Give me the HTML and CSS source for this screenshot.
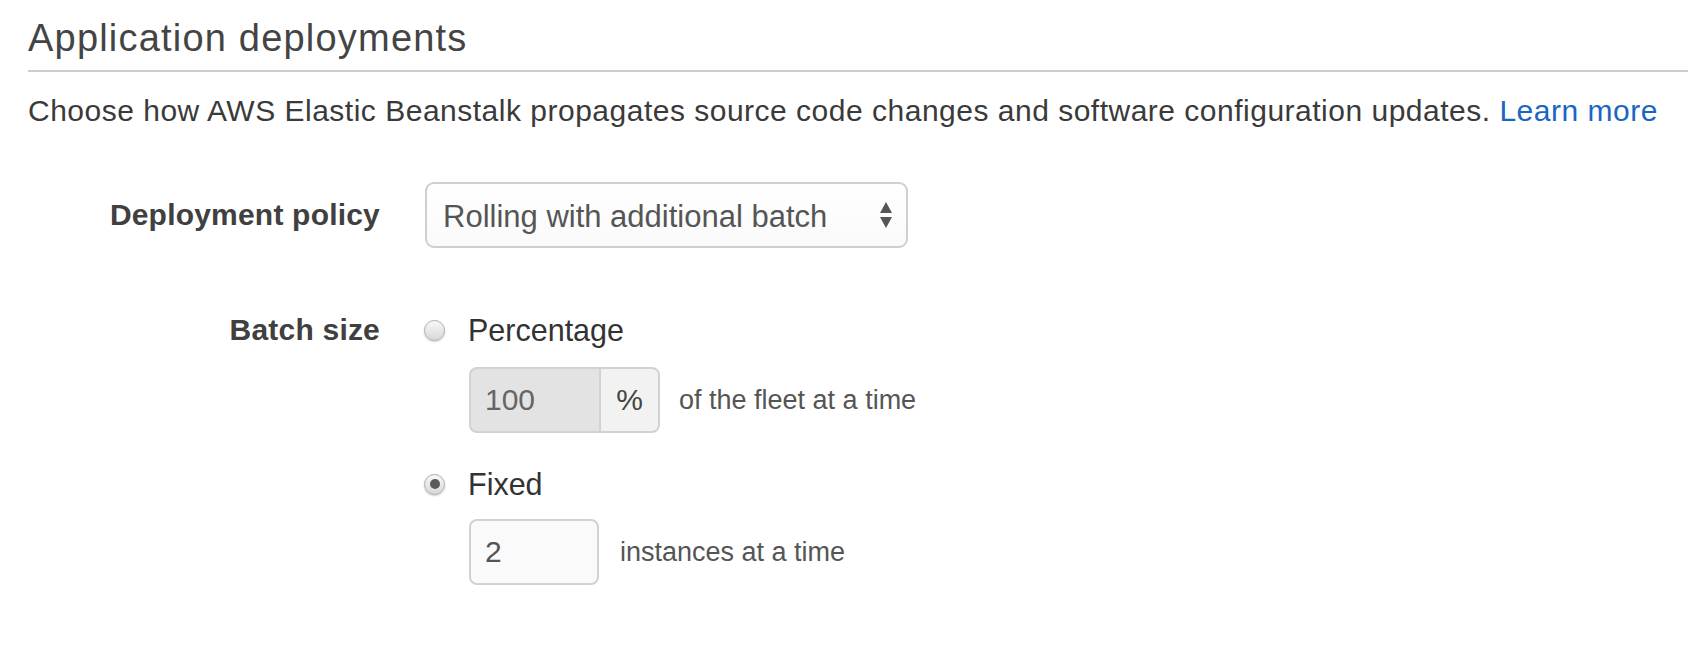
FILE: index.html
```html
<!DOCTYPE html>
<html lang="en">
<head>
<meta charset="utf-8">
<title>Application deployments</title>
<link rel="stylesheet" href="styles.css">
</head>
<body>
<div class="page">
  <h2 class="title">Application deployments</h2>
  <p class="desc">Choose how AWS Elastic Beanstalk propagates source code changes and software configuration updates. <a class="link" href="#">Learn more</a></p>
  <div class="form">
    <div class="row row-policy">
      <div class="label">Deployment policy</div>
      <div class="select">
        <span class="select-text">Rolling with additional batch</span>
        <svg class="arrows" width="14" height="28" viewBox="0 0 14 28">
          <path d="M7 1 L13 12 L1 12 Z" fill="#555"/>
          <path d="M1 16 L13 16 L7 27 Z" fill="#555"/>
        </svg>
      </div>
    </div>
    <div class="row row-batch">
      <div class="label label-top">Batch size</div>
      <div class="options">
        <div class="radio-line">
          <span class="radio"></span>
          <span class="radio-text">Percentage</span>
        </div>
        <div class="sub">
          <div class="group">
            <span class="input input-disabled">100</span>
            <span class="addon">%</span>
          </div>
          <span class="hint">of the fleet at a time</span>
        </div>
        <div class="radio-line radio-line-second">
          <span class="radio radio-checked"></span>
          <span class="radio-text">Fixed</span>
        </div>
        <div class="sub sub-second">
          <span class="input">2</span>
          <span class="hint hint-second">instances at a time</span>
        </div>
      </div>
    </div>
  </div>
</div>
</body>
</html>
```

FILE: styles.css
```css
html, body {
  margin: 0;
  padding: 0;
  background: #ffffff;
}

body {
  font-family: "Liberation Sans", Arial, sans-serif;
  color: #444444;
}

.page {
  padding: 18px 0 0 28px;
}

.title {
  margin: 0;
  font-size: 38px;
  line-height: 40px;
  font-weight: normal;
  letter-spacing: 1.2px;
  color: #444444;
  padding-bottom: 12px;
  border-bottom: 2px solid #cccccc;
}

.desc {
  margin: 21px 0 0 0;
  font-size: 30px;
  line-height: 36px;
  letter-spacing: 0.5px;
  color: #3a3a3a;
}

.link {
  color: #1a66c0;
  text-decoration: none;
}

.form {
  margin-top: 53px;
}

.row {
  display: grid;
  grid-template-columns: 352px auto;
  column-gap: 45px;
}

.row-policy {
  align-items: center;
}

.row-batch {
  margin-top: 62px;
  align-items: start;
}

.label {
  text-align: right;
  font-weight: bold;
  font-size: 30px;
  line-height: 40px;
  color: #404040;
  letter-spacing: 0.2px;
}

.select {
  width: 483px;
  height: 66px;
  box-sizing: border-box;
  border: 2px solid #cfcfcf;
  border-radius: 9px;
  background: linear-gradient(#ffffff, #fafafa);
  display: flex;
  align-items: center;
  justify-content: space-between;
  padding: 0 13px 0 16px;
}

.select-text {
  font-size: 31px;
  color: #555555;
  padding-top: 3px;
}

.arrows {
  display: block;
}

.options {
  display: flex;
  flex-direction: column;
  align-items: flex-start;
}

.radio-line {
  display: flex;
  align-items: center;
  height: 40px;
  gap: 23px;
}

.radio-line-second {
  margin-top: 31px;
}

.radio {
  width: 21px;
  height: 21px;
  box-sizing: border-box;
  border-radius: 50%;
  border: 1px solid #adadad;
  background: linear-gradient(#f8f8f8, #d8d8d8);
  box-shadow: 0 1px 2px rgba(0, 0, 0, 0.2);
  display: flex;
  align-items: center;
  justify-content: center;
  margin-left: -1px;
}

.radio-checked::after {
  content: "";
  width: 10px;
  height: 10px;
  border-radius: 50%;
  background: #5a5a5a;
}

.radio-text {
  font-size: 30.5px;
  color: #333333;
}

.sub {
  display: flex;
  align-items: center;
  gap: 19px;
  margin-top: 17px;
  margin-left: 44px;
}

.sub-second {
  margin-top: 15px;
  gap: 21px;
}

.group {
  display: flex;
  height: 66px;
}

.input {
  width: 130px;
  height: 66px;
  box-sizing: border-box;
  border: 2px solid #d2d2d2;
  border-radius: 8px;
  background: #fafafa;
  font-size: 30px;
  color: #555555;
  display: flex;
  align-items: center;
  padding-left: 14px;
}

.input-disabled {
  background: #e3e3e3;
  border-right: 0;
  border-radius: 8px 0 0 8px;
  color: #666666;
}

.addon {
  width: 61px;
  height: 66px;
  box-sizing: border-box;
  border: 2px solid #d2d2d2;
  border-radius: 0 8px 8px 0;
  background: #f2f2f2;
  font-size: 30px;
  color: #444444;
  display: flex;
  align-items: center;
  justify-content: center;
}

.hint {
  font-size: 27px;
  color: #555555;
}
```
